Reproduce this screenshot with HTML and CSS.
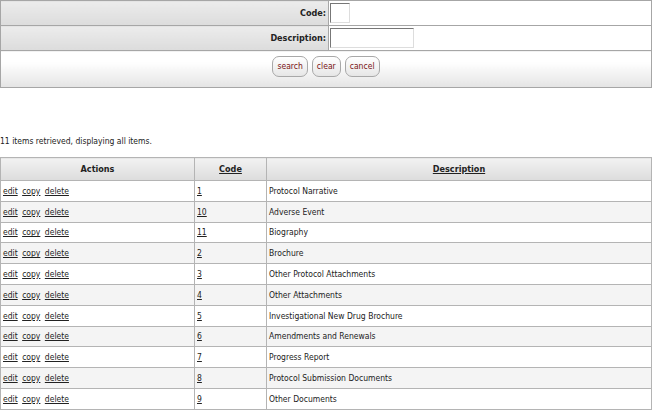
FILE: index.html
```html
<!DOCTYPE html>
<html>
<head>
<meta charset="utf-8">
<link rel="stylesheet" href="styles.css">
</head>
<body>
<table class="search">
  <tr>
    <th class="label">Code:</th>
    <td class="field"><input class="in-code" type="text"></td>
  </tr>
  <tr>
    <th class="label">Description:</th>
    <td class="field"><input class="in-desc" type="text"></td>
  </tr>
  <tr>
    <td class="buttons" colspan="2">
      <span class="btn">search</span><span class="btn">clear</span><span class="btn">cancel</span>
    </td>
  </tr>
</table>
<p class="count">11 items retrieved, displaying all items.</p>
<table class="results">
  <tr>
    <th class="c-act">Actions</th>
    <th class="c-code"><a href="#">Code</a></th>
    <th class="c-desc"><a href="#">Description</a></th>
  </tr>
  <tr><td><a href="#">edit</a> <a href="#">copy</a> <a href="#">delete</a></td><td><a href="#">1</a></td><td>Protocol Narrative</td></tr>
  <tr class="alt"><td><a href="#">edit</a> <a href="#">copy</a> <a href="#">delete</a></td><td><a href="#">10</a></td><td>Adverse Event</td></tr>
  <tr><td><a href="#">edit</a> <a href="#">copy</a> <a href="#">delete</a></td><td><a href="#">11</a></td><td>Biography</td></tr>
  <tr class="alt"><td><a href="#">edit</a> <a href="#">copy</a> <a href="#">delete</a></td><td><a href="#">2</a></td><td>Brochure</td></tr>
  <tr><td><a href="#">edit</a> <a href="#">copy</a> <a href="#">delete</a></td><td><a href="#">3</a></td><td>Other Protocol Attachments</td></tr>
  <tr class="alt"><td><a href="#">edit</a> <a href="#">copy</a> <a href="#">delete</a></td><td><a href="#">4</a></td><td>Other Attachments</td></tr>
  <tr><td><a href="#">edit</a> <a href="#">copy</a> <a href="#">delete</a></td><td><a href="#">5</a></td><td>Investigational New Drug Brochure</td></tr>
  <tr class="alt"><td><a href="#">edit</a> <a href="#">copy</a> <a href="#">delete</a></td><td><a href="#">6</a></td><td>Amendments and Renewals</td></tr>
  <tr><td><a href="#">edit</a> <a href="#">copy</a> <a href="#">delete</a></td><td><a href="#">7</a></td><td>Progress Report</td></tr>
  <tr class="alt"><td><a href="#">edit</a> <a href="#">copy</a> <a href="#">delete</a></td><td><a href="#">8</a></td><td>Protocol Submission Documents</td></tr>
  <tr><td><a href="#">edit</a> <a href="#">copy</a> <a href="#">delete</a></td><td><a href="#">9</a></td><td>Other Documents</td></tr>
</table>
</body>
</html>
```
FILE: styles.css
```css
html, body {
  margin: 0;
  padding: 0;
  background: #ffffff;
}
body {
  font-family: "DejaVu Sans Condensed", "DejaVu Sans", sans-serif;
  font-stretch: condensed;
  font-size: 8.5px;
  color: #222;
}
a {
  color: #222;
  text-decoration: underline;
}
table {
  border-collapse: collapse;
  width: 652px;
}
.search {
  border: 1px solid #999;
}
.search th, .search td {
  border: 1px solid #a6a6a6;
  padding: 0;
}
.search tr {
  height: 25px;
}
.label {
  width: 325px;
  text-align: right;
  font-weight: bold;
  font-size: 9px;
  background: linear-gradient(#ececec, #dcdcdc);
}
.search .label { padding-right: 2px; }
.field {
  background: #fff;
}
.search .field { padding-left: 1px; }
input {
  box-sizing: border-box;
  height: 20px;
  border: 1px solid #999;
  border-top-color: #777;
  border-left-color: #777;
  border-right-color: #ddd;
  border-bottom-color: #ddd;
  margin: 0;
  vertical-align: middle;
  font-size: 9px;
}
.in-code { width: 20px; }
.in-desc { width: 84px; }
.search tr:last-child {
  height: 37px;
}
.search .buttons {
  text-align: center;
  vertical-align: top;
  padding-top: 5px;
  background: linear-gradient(#ffffff 30%, #e4e4e4);
}
.btn {
  display: inline-block;
  box-sizing: border-box;
  height: 21px;
  line-height: 19px;
  padding: 0 4px;
  margin: 0 2px;
  border: 1px solid #a8a8a8;
  border-radius: 7px;
  background: linear-gradient(#ffffff, #e6e6e6);
  color: #7a1414;
  vertical-align: middle;
}
.count {
  margin: 46px 0 0 0;
  height: 23px;
  line-height: 14px;
}
.results {
  border: 1px solid #a6a6a6;
}
.results th, .results td {
  border: 1px solid #b4b4b4;
  padding: 0 2px;
  text-align: left;
  height: 19.8px;
}
.results th {
  height: 22px;
  text-align: center;
  font-weight: bold;
  font-size: 9px;
  background: linear-gradient(#f2f2f2, #dcdcdc);
}
.c-act { width: 189px; }
.c-code { width: 67px; }
.results .alt td {
  background: #f4f4f4;
}
.results td a {
  margin-right: 2px;
}
```
